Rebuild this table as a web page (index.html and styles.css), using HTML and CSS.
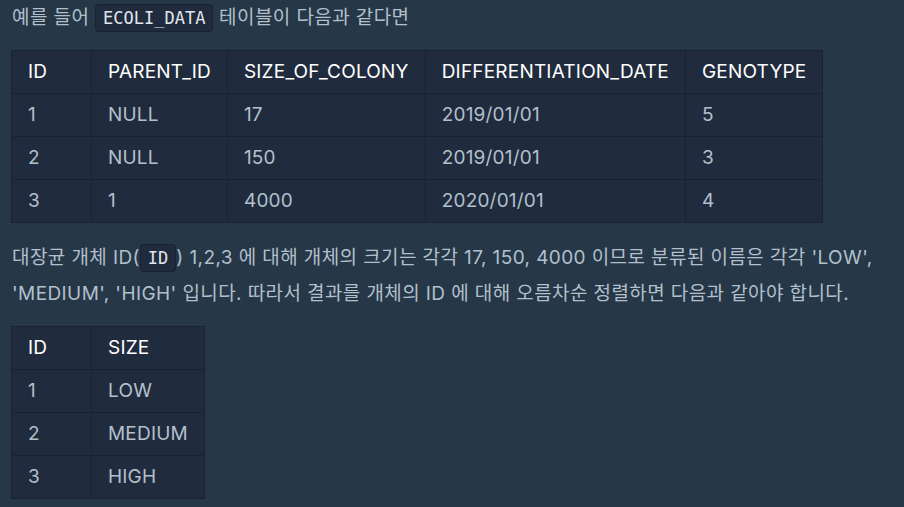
FILE: index.html
```html
<!DOCTYPE html>
<html lang="ko">
<head>
<meta charset="utf-8">
<link rel="stylesheet" href="styles.css">
</head>
<body>
<div class="content">
  <p class="p-first">예를 들어 <code>ECOLI_DATA</code> 테이블이 다음과 같다면</p>
  <table class="tbl">
    <thead>
      <tr><th>ID</th><th>PARENT_ID</th><th>SIZE_OF_COLONY</th><th>DIFFERENTIATION_DATE</th><th>GENOTYPE</th></tr>
    </thead>
    <tbody>
      <tr><td>1</td><td>NULL</td><td>17</td><td>2019/01/01</td><td>5</td></tr>
      <tr><td>2</td><td>NULL</td><td>150</td><td>2019/01/01</td><td>3</td></tr>
      <tr><td>3</td><td>1</td><td>4000</td><td>2020/01/01</td><td>4</td></tr>
    </tbody>
  </table>
  <p class="p-second">대장균 개체 ID(<code>ID</code>) 1,2,3 에 대해 개체의 크기는 각각 17, 150, 4000 이므로 분류된 이름은 각각 'LOW', 'MEDIUM', 'HIGH' 입니다. 따라서 결과를 개체의 ID 에 대해 오름차순 정렬하면 다음과 같아야 합니다.</p>
  <table class="tbl">
    <thead>
      <tr><th>ID</th><th>SIZE</th></tr>
    </thead>
    <tbody>
      <tr><td>1</td><td>LOW</td></tr>
      <tr><td>2</td><td>MEDIUM</td></tr>
      <tr><td>3</td><td>HIGH</td></tr>
    </tbody>
  </table>
</div>
</body>
</html>
```

FILE: styles.css
```css
html, body {
  margin: 0;
  padding: 0;
  background: #263747;
}
body {
  font-family: "Inter", "Noto Sans CJK KR", sans-serif;
  font-size: 19px;
  color: #b2c0cc;
}
.content {
  padding: 0 11px;
}
p {
  margin: 0;
  line-height: 36px;
  letter-spacing: 0.4px;
}
.p-first {
  padding-left: 1px;
}
.p-second {
  margin-top: 17px;
  padding-left: 1px;
}
code {
  font-family: "DejaVu Sans Mono", monospace;
  font-size: 17px;
  letter-spacing: 0;
  color: #e0e6ec;
  background: #202b3d;
  border: 1px solid #172334;
  border-radius: 4px;
  padding: 3px 7px;
}
.tbl {
  border-collapse: collapse;
  background: #202b3d;
  border: 1px solid #172334;
  margin-top: 14px;
  letter-spacing: 0.2px;
}
.tbl th, .tbl td {
  border: 1px solid #172334;
  padding: 8px 16px;
  line-height: 26px;
  text-align: left;
  font-weight: 400;
  white-space: nowrap;
}
.tbl th {
  color: #ffffff;
  min-width: 47px;
}
.tbl td {
  color: #b2c0cc;
}
```
